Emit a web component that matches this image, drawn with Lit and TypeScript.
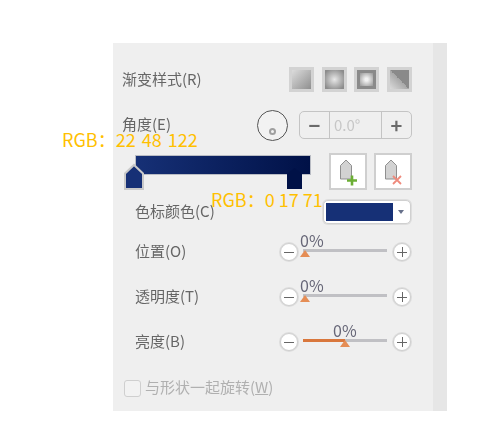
import { LitElement, html, css, svg } from "lit";
import { customElement } from "lit/decorators.js";

const stopIcon = (kind: "add" | "del") => html`
  <svg width="24" height="28" viewBox="0 0 24 28">
    <path d="M3.5 21V7.5L9 2l5.5 5.5V21z" fill="#d2d2d2" stroke="#8f8f8f" stroke-width="1"/>
    ${kind === "add"
      ? svg`<path d="M15 17.5v10M10 22.5h10" stroke="#6cae35" stroke-width="2.6" fill="none"/>`
      : svg`<path d="M11 18l8 8M19 18l-8 8" stroke="#ef8a7c" stroke-width="1.8" fill="none"/>`}
  </svg>`;

@customElement("app-root")
export class AppRoot extends LitElement {
  static styles = css`
    :host { display: block; position: relative; width: 497px; height: 436px; background: #fff; font-family: "Noto Sans CJK SC", "Noto Sans", sans-serif; overflow: hidden; }
    .panel { position: absolute; left: 113px; top: 43px; width: 334px; height: 368px; background: #efefef; display: flex; filter: blur(0.45px); }
    .content { width: 320px; padding: 24px 21px 0 9px; box-sizing: border-box; color: #666; font-size: 15px; }
    .scroll { width: 14px; background: #e6e6e6; }
    .row { display: flex; align-items: center; justify-content: space-between; }
    .label { line-height: 20px; white-space: nowrap; position: relative; top: -1px; }
    .ind { margin-left: 13px; }
    .styles { height: 25px; }
    .swatches { display: flex; gap: 7.6px; }
    .sw { width: 25px; height: 25px; box-sizing: border-box; border: 3px solid #d3d3d3; }
    .sw1 { background: linear-gradient(135deg, #dcdcdc, #8f8f8f); }
    .sw2 { background: radial-gradient(circle, #e8e8e8 0%, #8c8c8c 85%); }
    .sw3 { background: #8a8a8a; position: relative; }
    .sw3::after { content: ""; position: absolute; inset: 3px; background: radial-gradient(circle, #f2f2f2 15%, #a0a0a0 90%); }
    .sw4 { background: linear-gradient(45deg, #dadada 0%, #a8a8a8 50%, #8a8a8a 50%, #8a8a8a 100%); }
    .angle { height: 28px; margin-top: 19px; }
    .angle-right { display: flex; align-items: center; gap: 11px; }
    .dial { width: 31px; height: 31px; box-sizing: border-box; border: 1px solid #555; border-radius: 50%; background: #f2f2f2; display: flex; align-items: flex-end; justify-content: center; padding-bottom: 5px; }
    .dial span { width: 7px; height: 7px; box-sizing: border-box; border: 2px solid #a0a0a0; border-radius: 50%; }
    .stepper { display: flex; width: 113px; height: 28px; box-sizing: border-box; border: 1px solid #c4c4c4; border-radius: 5px; color: #666; }
    .stepper b { width: 29px; text-align: center; line-height: 25px; font-size: 20px; font-weight: 700; color: #6a6a6a; }
    .stepper i { flex: 1; font-style: normal; border-left: 1px solid #c4c4c4; border-right: 1px solid #c4c4c4; color: #c6c6c6; font-size: 15px; line-height: 25px; padding-left: 4px; }
    .stops { height: 37px; margin-top: 14px; margin-left: 13px; justify-content: flex-start; }
    .bar-wrap { position: relative; width: 176px; height: 37px; margin-right: 18px; }
    .bar { position: absolute; left: 0; top: 2px; width: 176px; height: 20px; box-sizing: border-box; border: 1px solid #b9bcc4; background: linear-gradient(90deg, #163076, #001147); }
    .handle { position: absolute; overflow: visible; }
    .h1 { left: -11px; top: 11px; }
    .h2 { left: 152px; top: 15px; }
    .btn { width: 38px; height: 37px; box-sizing: border-box; border: 2px solid #cfcfcf; background: #fff; display: flex; align-items: center; justify-content: center; padding-left: 2px; }
    .btn + .btn { margin-left: 7px; }
    .color { height: 24px; margin-top: 10px; }
    .select { width: 88px; height: 24px; box-sizing: border-box; border: 1px solid #d0d0d0; border-radius: 5px; background: #fff; display: flex; align-items: center; padding: 2px; gap: 5px; margin-right: 1px; box-shadow: 0 0 0 1px #dedede; }
    .select span { width: 67px; height: 18px; background: #163076; }
    .select em { width: 0; height: 0; border: 3.5px solid transparent; border-top: 4px solid #66708a; border-bottom: 0; }
    .slider { height: 20px; margin-left: 13px; margin-right: 1px; }
    .s1 { margin-top: 18px; }
    .s2 { margin-top: 25px; }
    .ctrl { display: flex; align-items: center; width: 131px; }
    .round { width: 18px; height: 18px; box-sizing: border-box; border: 1px solid #cfcfcf; box-shadow: 0 0 0 1px #dcdcdc; border-radius: 50%; background: #fff; position: relative; flex: none; }
    .round::before { content: ""; position: absolute; left: 3px; right: 3px; top: 7.5px; height: 1px; background: #666; }
    .round.plus::after { content: ""; position: absolute; top: 3px; bottom: 3px; left: 7.5px; width: 1px; background: #666; }
    .track { position: relative; width: 84px; height: 3px; background: #c0c0c4; margin: 0 6px 3px 5px; }
    .fill { position: absolute; left: 0; top: 0; height: 100%; background: #d9773c; }
    .thumb { position: absolute; top: 1px; width: 0; height: 0; border: 5.5px solid transparent; border-bottom: 7px solid #e58d55; border-top: 0; }
    .val { position: absolute; top: -18px; font-size: 16px; line-height: 18px; color: #667; }
    .check-row { margin-top: 27px; height: 18px; justify-content: flex-start; gap: 4px; margin-left: 2px; color: #b0b0b0; }
    .check { width: 17px; height: 17px; box-sizing: border-box; border: 1px solid #cfcfcf; border-radius: 3px; background: #f2f2f2; }
    .check-row u { text-decoration-thickness: 1px; }
    .note { position: absolute; color: #ffc000; font-size: 18px; line-height: 20px; white-space: nowrap; }
    .n1 { left: 62px; top: 129px; word-spacing: 2px; }
    .n2 { left: 211px; top: 189px; }
  `;

  private sliderRow(label: string, key: string, pct: number, valX: number, cls: string) {
    const fillW = (pct / 100) * 84;
    return html`
      <div class="row slider ${cls}">
        <span class="label">${label}(${key})</span>
        <div class="ctrl">
          <span class="round"></span>
          <div class="track">
            <div class="fill" style="width:${fillW}px"></div>
            <div class="thumb" style="left:${fillW * 0.95 - 3}px"></div>
            <span class="val" style="left:${valX}px">0%</span>
          </div>
          <span class="round plus"></span>
        </div>
      </div>`;
  }

  render() {
    return html`
      <div class="panel">
        <div class="content">
          <div class="row styles">
            <span class="label">渐变样式(R)</span>
            <div class="swatches">
              <div class="sw sw1"></div><div class="sw sw2"></div><div class="sw sw3"></div><div class="sw sw4"></div>
            </div>
          </div>
          <div class="row angle">
            <span class="label">角度(E)</span>
            <div class="angle-right">
              <div class="dial"><span></span></div>
              <div class="stepper"><b>−</b><i>0.0°</i><b>+</b></div>
            </div>
          </div>
          <div class="row stops">
            <div class="bar-wrap">
              <div class="bar"></div>
              <svg class="handle h1" width="20" height="26" viewBox="0 0 20 26">
                <path d="M1 25V9.5L10 1l9 8.5V25z" fill="#163076" stroke="#c9c9c9" stroke-width="2"/>
              </svg>
              <svg class="handle h2" width="15" height="21" viewBox="0 0 15 21">
                <path d="M0 21V6L7.5 0 15 6v15z" fill="#001147"/>
              </svg>
            </div>
            <div class="btn">${stopIcon("add")}</div>
            <div class="btn">${stopIcon("del")}</div>
          </div>
          <div class="row color ind">
            <span class="label">色标颜色(C)</span>
            <div class="select"><span></span><em></em></div>
          </div>
          ${this.sliderRow("位置", "O", 0, -3, "s1")}
          ${this.sliderRow("透明度", "T", 0, -3, "s2")}
          ${this.sliderRow("亮度", "B", 50, 30, "s2")}
          <div class="row check-row">
            <span class="check"></span>
            <span class="label">与形状一起旋转(<u>W</u>)</span>
          </div>
        </div>
        <div class="scroll"></div>
      </div>
      <div class="note n1">RGB：22 48 122</div>
      <div class="note n2">RGB：0 17 71</div>
    `;
  }
}
